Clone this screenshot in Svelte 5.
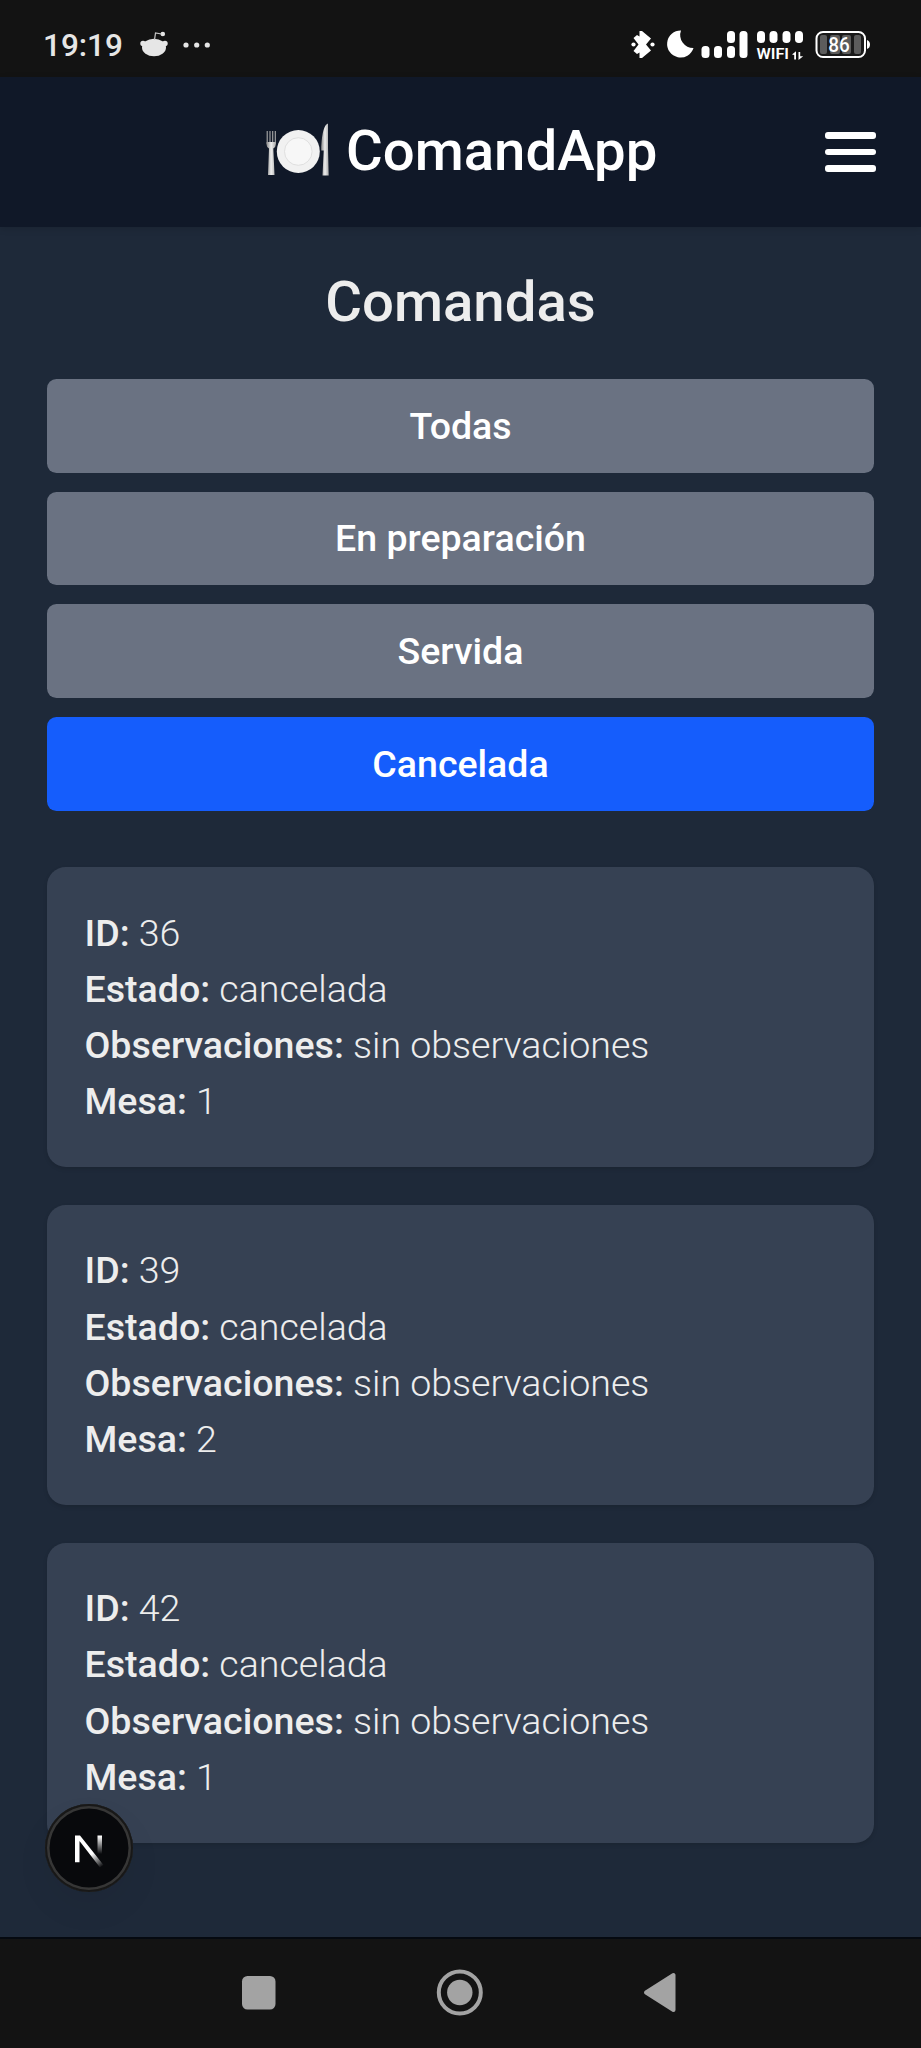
<script>
  const filters = ['Todas', 'En preparación', 'Servida', 'Cancelada'];
  let active = $state('Cancelada');
  const orders = [
    { id: 36, estado: 'cancelada', observaciones: 'sin observaciones', mesa: 1 },
    { id: 39, estado: 'cancelada', observaciones: 'sin observaciones', mesa: 2 },
    { id: 42, estado: 'cancelada', observaciones: 'sin observaciones', mesa: 1 }
  ];
</script>

<div class="screen">
  <div class="status">
    <div class="left">
      <span class="time">19:19</span>
      <svg class="reddit" width="30" height="28" viewBox="0 0 30 28">
        <g fill="#e6e6e6">
          <ellipse cx="15" cy="16.500" rx="12" ry="8.800" />
          <circle cx="4" cy="12.500" r="2.700" />
          <circle cx="26" cy="12.500" r="2.700" />
          <circle cx="23.800" cy="3" r="2.300" />
        </g>
        <path d="M15.500 9l1-7 6 1" fill="none" stroke="#c8c8c8" stroke-width="1.200" />
      </svg>
      <svg class="more" width="28" height="6" viewBox="0 0 28 6" fill="#e6e6e6">
        <circle cx="3" cy="3" r="2.600" /><circle cx="13.700" cy="3" r="2.600" /><circle cx="24.300" cy="3" r="2.600" />
      </svg>
    </div>
    <svg class="right" width="242" height="36" viewBox="628 26 242 36" fill="#fff">
      <path d="M639.500 31h2.500l9 7.500-5 6 5 6-9 7.500h-2.500v-5.500l-2.500 1.500-3.500-3 5-6.500-5-6.500 3.500-3 2.500 1.500z" />
      <circle cx="633.500" cy="44.500" r="2.100" /><circle cx="652.500" cy="44.500" r="2.100" />
      <path d="M681 30.500a13.500 13.500 0 1 0 12.500 17.500a13 13 0 0 1-12.500-17.500z" />
      <rect x="701.500" y="46" width="8" height="12" rx="3.500" />
      <rect x="714" y="46" width="8" height="12" rx="3.500" />
      <rect x="727" y="46" width="8" height="12" rx="3.500" />
      <rect x="727" y="31" width="8" height="12" rx="3.500" />
      <rect x="739.500" y="31" width="8" height="27" rx="3.500" />
      <rect x="757" y="31" width="8" height="12" rx="3.800" />
      <rect x="769.500" y="31" width="8" height="12" rx="3.800" />
      <rect x="782.500" y="31" width="8" height="12" rx="3.800" />
      <rect x="795" y="31" width="8" height="12" rx="3.800" />
      <text x="756.500" y="58.500" font-size="15.500" font-weight="600" textLength="32.500" lengthAdjust="spacingAndGlyphs">WIFI</text>
      <path d="M792 54.500l4-3.200v8.200h-1.800v-4.500zM798.500 52h1.700v4.300h3l-4.700 3.700z" />
      <rect x="816.500" y="32" width="48.500" height="25" rx="6.500" fill="#1a1a1a" stroke="#fff" stroke-width="2" />
      <g fill="#5c5c5c">
        <rect x="820" y="35" width="7" height="19" rx="2" /><rect x="830" y="35" width="10" height="19" rx="2" />
        <rect x="842" y="35" width="9" height="19" rx="2" /><rect x="854" y="35" width="7" height="19" rx="2" />
      </g>
      <path d="M867 40q3 1 3 4.500t-3 4.500z" />
      <text x="839" y="51.500" font-size="20" font-weight="500" text-anchor="middle" textLength="21.500" lengthAdjust="spacingAndGlyphs">86</text>
    </svg>
  </div>

  <header>
    <svg class="plate" width="66" height="58" viewBox="264 121 66 58">
      <defs>
        <linearGradient id="metal"><stop offset="0" stop-color="#888" /><stop offset=".5" stop-color="#eee" /><stop offset="1" stop-color="#aaa" /></linearGradient>
      </defs>
      <path d="M267.200 131v13M270 131v13M272.700 131v13M275.300 131v13" stroke="#aaa" stroke-width="1.100" />
      <path d="M266.500 142h9.300v2.500q0 2.500-2.500 4L274.500 175h-6.500l1-26.500q-2.500-1.500-2.500-4z" fill="url(#metal)" />
      <circle cx="298.300" cy="151.500" r="21.500" fill="#f1f1f1" />
      <circle cx="298.300" cy="151.500" r="13.800" fill="#f7f7f7" stroke="#d9d9d9" stroke-width=".8" />
      <path d="M328 123.500q-5.500 1.500-6.800 23v4h2.500L322.500 175.500h6.200L328 148z" fill="url(#metal)" />
    </svg>
    <h1>ComandApp</h1>
    <button class="menu" aria-label="Menú"><i></i><i></i><i></i></button>
  </header>

  <main>
    <h2>Comandas</h2>
    <div class="filters">
      {#each filters as f}
        <button class:active={active === f} onclick={() => (active = f)}>{f}</button>
      {/each}
    </div>
    <div class="orders">
      {#each orders as o}
        <article>
          <p><strong>ID:</strong> {o.id}</p>
          <p><strong>Estado:</strong> {o.estado}</p>
          <p><strong>Observaciones:</strong> {o.observaciones}</p>
          <p><strong>Mesa:</strong> {o.mesa}</p>
        </article>
      {/each}
    </div>
    <div class="badge">
      <svg width="88" height="88" viewBox="0 0 88 88" fill="none">
        <defs>
          <linearGradient id="diag" gradientUnits="userSpaceOnUse" x1="48" y1="49" x2="58" y2="62"><stop stop-color="#fff" /><stop offset="1" stop-color="#fff" stop-opacity="0" /></linearGradient>
          <linearGradient id="stem" gradientUnits="userSpaceOnUse" x1="0" y1="32" x2="0" y2="50"><stop stop-color="#fff" /><stop offset="1" stop-color="#fff" stop-opacity="0" /></linearGradient>
        </defs>
        <path d="M30 31.500h5L58.500 61l-3.500 2.500L34.500 37v21.300H30z" fill="url(#diag)" />
        <rect x="52.500" y="31.500" width="4.500" height="20" fill="url(#stem)" />
      </svg>
    </div>
  </main>

  <nav>
    <svg width="921" height="108" viewBox="0 1939 921 108" fill="#a3a3a3">
      <rect x="242" y="1976" width="33.500" height="33.500" rx="5.500" />
      <circle cx="459.800" cy="1992.500" r="21" fill="none" stroke="#a3a3a3" stroke-width="4" />
      <circle cx="459.800" cy="1992.500" r="12.700" />
      <path d="M646 1992.500L673.500 1975v35z" stroke="#a3a3a3" stroke-width="4" stroke-linejoin="round" />
    </svg>
  </nav>
</div>

<style>
  :global(body) { margin: 0; background: #1e2939; }
  .screen {
    width: 921px; height: 2048px; display: flex; flex-direction: column; overflow: hidden;
    font-family: Roboto, sans-serif; background: #1e2939; color: #ededed;
  }
  .status {
    height: 77px; flex: none; box-sizing: border-box; background: #131313;
    display: flex; justify-content: space-between; padding: 26px 51px 0 43px;
  }
  .left { display: flex; align-items: flex-start; }
  .time { font-size: 31.5px; line-height: 40px; font-weight: 500; width: 80px; color: #e6e6e6; white-space: nowrap; }
  .reddit { margin: 5px 0 0 15.5px; }
  .more { margin: 15.500px 0 0 14.5px; }
  header {
    height: 150px; flex: none; background: #101828; display: flex; align-items: center;
    padding: 0 45px 0 264px; box-sizing: border-box; z-index: 1;
    box-shadow: 0 2px 7px rgba(0, 0, 0, .12);
  }
  .plate { margin-top: -4px; }
  h1 { margin: 0 0 1px 16px; font-size: 56.3px; line-height: 75px; font-weight: 500; color: #fff; white-space: nowrap; }
  button { border: 0; font-family: inherit; }
  .menu { margin-left: auto; padding: 0; background: none; display: flex; flex-direction: column; gap: 10.3px; width: 51px; }
  .menu i { height: 6.2px; border-radius: 3px; background: #fff; }
  main { flex: 1; position: relative; min-height: 0; padding: 38px 47px 0; }
  h2 { margin: 0 0 39px; text-align: center; font-size: 56.3px; line-height: 75px; font-weight: 500; }
  .filters { display: grid; gap: 18.8px; margin-bottom: 56.5px; }
  .filters button {
    height: 93.8px; border-radius: 9.4px; background: #6a7282; color: #fff;
    font-size: 37.5px; line-height: 56.3px; font-weight: 500; padding: 0;
  }
  .filters button.active { background: #155dfc; }
  .orders { display: grid; gap: 37.6px; }
  article {
    padding: 37.5px; border-radius: 18.8px; background: #364153;
    box-shadow: 0 2px 4px rgba(0, 0, 0, .12);
  }
  p { margin: 0; font-size: 37.55px; line-height: 56.3px; font-weight: 300; }
  strong { font-weight: 500; }
  .badge {
    position: absolute; left: 45px; top: 1576.500px; width: 88px; height: 88px; border-radius: 50%;
    background: #08090c; box-shadow: inset 0 0 0 2px #181818, inset 0 0 0 4.5px #363636, 0 16px 36px rgba(0, 0, 0, .05);
  }
  .badge svg { display: block; }
  nav { height: 111px; flex: none; box-sizing: border-box; background: #131313; border-top: 2px solid #050910; }
  nav svg { display: block; }
</style>
